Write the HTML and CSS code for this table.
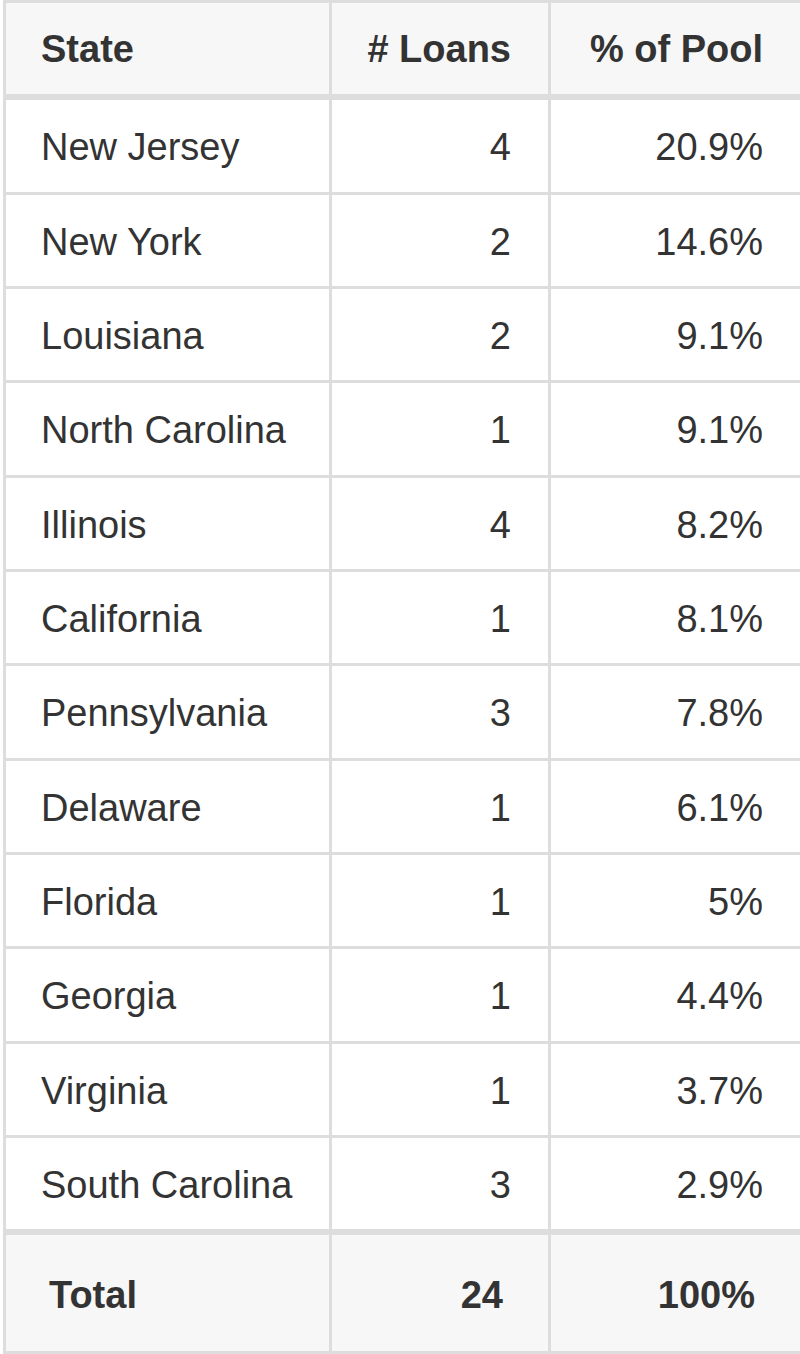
FILE: index.html
```html
<!DOCTYPE html>
<html>
<head>
<meta charset="utf-8">
<link rel="stylesheet" href="styles.css">
</head>
<body>
<div class="wrap">
<table class="pool">
  <colgroup>
    <col class="c-state">
    <col class="c-loans">
    <col class="c-pct">
  </colgroup>
  <thead>
    <tr><th class="left">State</th><th class="num"># Loans</th><th class="num">% of Pool</th></tr>
  </thead>
  <tbody>
    <tr><td>New Jersey</td><td class="num">4</td><td class="num">20.9%</td></tr>
    <tr><td>New York</td><td class="num">2</td><td class="num">14.6%</td></tr>
    <tr><td>Louisiana</td><td class="num">2</td><td class="num">9.1%</td></tr>
    <tr><td>North Carolina</td><td class="num">1</td><td class="num">9.1%</td></tr>
    <tr><td>Illinois</td><td class="num">4</td><td class="num">8.2%</td></tr>
    <tr><td>California</td><td class="num">1</td><td class="num">8.1%</td></tr>
    <tr><td>Pennsylvania</td><td class="num">3</td><td class="num">7.8%</td></tr>
    <tr><td>Delaware</td><td class="num">1</td><td class="num">6.1%</td></tr>
    <tr><td>Florida</td><td class="num">1</td><td class="num">5%</td></tr>
    <tr><td>Georgia</td><td class="num">1</td><td class="num">4.4%</td></tr>
    <tr><td>Virginia</td><td class="num">1</td><td class="num">3.7%</td></tr>
    <tr><td>South Carolina</td><td class="num">3</td><td class="num">2.9%</td></tr>
  </tbody>
  <tfoot>
    <tr><td>Total</td><td class="num">24</td><td class="num">100%</td></tr>
  </tfoot>
</table>
</div>
</body>
</html>
```

FILE: styles.css
```css
html, body {
  margin: 0;
  padding: 0;
  background: #ffffff;
}

.wrap {
  padding-left: 3px;
}

.pool {
  border-collapse: collapse;
  width: 797px;
  table-layout: fixed;
  font-family: "Liberation Sans", Arial, Helvetica, sans-serif;
  font-size: 38px;
  line-height: 43.33px;
  color: #333333;
}

.c-state { width: 326px; }
.c-loans { width: 219px; }
.c-pct { width: 252px; }

.pool th,
.pool td {
  border: 3px solid #dddddd;
  padding: 26px 37px 22px 35px;
  text-align: left;
  white-space: nowrap;
}

.pool thead th {
  background: #f7f7f7;
  font-weight: bold;
  border-bottom-width: 6px;
  padding-top: 25px;
  padding-bottom: 23px;
}

.pool .num {
  text-align: right;
}

.pool tfoot td {
  background: #f7f7f7;
  font-weight: bold;
  border-top-width: 6px;
  padding: 39px 45px 33px 43px;
}
```
